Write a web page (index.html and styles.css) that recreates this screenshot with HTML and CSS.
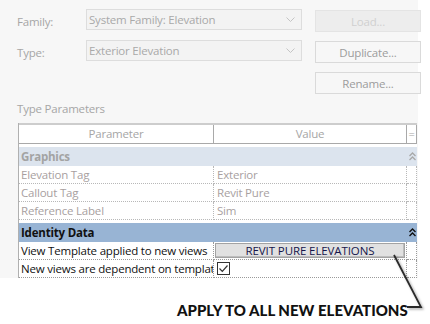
FILE: index.html
```html
<!DOCTYPE html>
<html>
<head>
  <meta charset="utf-8"/>
  <title>Type Properties</title>
  <link rel="stylesheet" href="styles.css">
</head>
<body>
  <div class="dialog">
    <!-- family / type pickers -->
    <div class="pickers">
      <span class="field-label">Family:</span>
      <div class="combo">
        <span>System Family: Elevation</span>
        <svg class="combo-arrow" width="9" height="6" viewBox="0 0 9 6"><path d="M0.5 0.5 L4.5 4.5 L8.5 0.5" fill="none" stroke="#c4c4c4" stroke-width="1"/></svg>
      </div>
      <button class="btn btn-off">Load...</button>

      <span class="field-label">Type:</span>
      <div class="combo">
        <span>Exterior Elevation</span>
        <svg class="combo-arrow" width="9" height="6" viewBox="0 0 9 6"><path d="M0.5 0.5 L4.5 4.5 L8.5 0.5" fill="none" stroke="#c4c4c4" stroke-width="1"/></svg>
      </div>
      <button class="btn">Duplicate...</button>

      <span></span>
      <span></span>
      <button class="btn">Rename...</button>
    </div>

    <div class="section-title">Type Parameters</div>

    <!-- parameter grid -->
    <div class="props">
      <div class="props-head">
        <div class="head-cell">Parameter</div>
        <div class="head-cell">Value</div>
        <div class="head-cell head-eq">=</div>
      </div>

      <div class="group group-off">
        <div class="group-name">Graphics</div>
        <div class="group-toggle">
          <svg width="7" height="9" viewBox="0 0 7 9"><path d="M0.5 4 L3.5 1 L6.5 4 M0.5 8 L3.5 5 L6.5 8" fill="none" stroke="#a8a8a8" stroke-width="1.3"/></svg>
        </div>
      </div>
      <div class="prop prop-off">
        <div class="cell">Elevation Tag</div>
        <div class="cell cell-value">Exterior</div>
        <div class="cell"></div>
      </div>
      <div class="prop prop-off">
        <div class="cell">Callout Tag</div>
        <div class="cell cell-value">Revit Pure</div>
        <div class="cell"></div>
      </div>
      <div class="prop prop-off">
        <div class="cell">Reference Label</div>
        <div class="cell cell-value">Sim</div>
        <div class="cell"></div>
      </div>

      <div class="group group-on">
        <div class="group-name">Identity Data</div>
        <div class="group-toggle">
          <svg width="7" height="9" viewBox="0 0 7 9"><path d="M0.5 4 L3.5 1 L6.5 4 M0.5 8 L3.5 5 L6.5 8" fill="none" stroke="#111" stroke-width="1.4"/></svg>
        </div>
      </div>
      <div class="prop">
        <div class="cell">View Template applied to new views</div>
        <div class="cell cell-btn"><button class="value-btn">REVIT PURE ELEVATIONS</button></div>
        <div class="cell"></div>
      </div>
      <div class="prop">
        <div class="cell">New views are dependent on template</div>
        <div class="cell cell-check">
          <span class="checkbox">
            <svg width="11" height="11" viewBox="0 0 11 11"><path d="M1.5 5.5 L4.3 8.3 L9.5 2.5" fill="none" stroke="#333" stroke-width="1.2"/></svg>
          </span>
        </div>
        <div class="cell"></div>
      </div>
    </div>
  </div>

  <div class="callout">APPLY TO ALL NEW ELEVATIONS</div>

  <!-- leader line from the label to the button -->
  <svg class="leader" width="430" height="324" viewBox="0 0 430 324">
    <defs>
      <filter id="soft" x="-20%" y="-20%" width="140%" height="140%">
        <feDropShadow dx="1.5" dy="1.5" stdDeviation="1.2" flood-color="#000" flood-opacity="0.35"/>
      </filter>
    </defs>
    <polyline points="407,307 421,307 394,255" fill="none" stroke="#2b2b2b" stroke-width="1.8" filter="url(#soft)"/>
  </svg>
</body>
</html>
```

FILE: styles.css
```css
body {
  margin: 0;
  width: 430px;
  height: 324px;
  position: relative;
  overflow: hidden;
  background-color: #fff;
  font-family: "Open Sans", "Noto Sans", sans-serif;
  font-size: 11.5px;
  letter-spacing: -0.2px;
}
.dialog {
  width: 418px;
  height: 278px;
  box-sizing: border-box;
  padding-top: 10px;
  background-color: #f7f7f7;
}
.pickers {
  display: grid;
  grid-template-columns: 56px 216px 106px;
  grid-template-rows: 22px 22px 22px;
  column-gap: 13px;
  row-gap: 9px;
  padding-left: 17px;
}
.field-label {
  color: #a6a6a6;
  align-self: center;
}
.combo {
  height: 21px;
  margin-top: -1px;
  box-sizing: border-box;
  border: 1px solid #dddddd;
  background-color: #f3f3f3;
  color: #a9a9a9;
  padding: 0 6px 0 2px;
  display: flex;
  align-items: center;
  justify-content: space-between;
}
.btn {
  height: 22px;
  width: 106px;
  box-sizing: border-box;
  border: 1px solid #dadada;
  background-color: #f7f7f7;
  color: #9c9c9c;
  font-family: inherit;
  font-size: 11.5px;
  letter-spacing: -0.2px;
  padding: 0;
}
.btn-off {
  background-color: #ededed;
  border-color: #e4e4e4;
  color: #d0d0d0;
}
.section-title {
  color: #a6a6a6;
  line-height: 16px;
  margin: 7px 0 6px 17px;
}
.props {
  margin-left: 18px;
  width: 399px;
  box-sizing: border-box;
  border-left: 1px solid #b0b0b0;
  background-color: #fff;
}
.props-head, .prop, .group {
  display: grid;
  grid-template-columns: 195px 193px 10px;
}
.props-head {
  border-top: 2px solid #cdcdcd;
  border-bottom: 1px solid #a9a9a9;
  margin-bottom: 3px;
}
.head-cell {
  height: 18px;
  line-height: 18px;
  text-align: center;
  color: #a6a6a6;
  border-right: 1px solid #a9a9a9;
}
.head-eq {
  font-size: 11px;
}
.group {
  height: 19px;
  line-height: 19px;
  margin-top: 3px;
  font-weight: bold;
}
.props-head + .group {
  margin-top: 0;
}
.group-name {
  grid-column: 1 / 3;
  padding-left: 2px;
}
.group-toggle {
  display: flex;
  align-items: center;
  justify-content: center;
}
.group-off {
  background-color: #dce4ee;
  color: #a3a3a3;
}
.group-on {
  background-color: #98b4d4;
  color: #111;
}
.prop .cell {
  height: 17px;
  line-height: 17px;
  border-right: 1px dotted #9a9a9a;
  border-bottom: 1px dotted #9a9a9a;
  white-space: nowrap;
  overflow: hidden;
  padding-left: 2px;
  color: #111;
}
.prop-off .cell {
  color: #a89f9f;
  border-color: #b8b8b8;
}
.prop .cell-value {
  padding-left: 3px;
}
.prop .cell-btn {
  padding: 1px 0 0 1px;
  box-sizing: border-box;
  height: 18px;
}
.value-btn {
  display: block;
  width: 190px;
  height: 15px;
  box-sizing: border-box;
  border: 1px solid #a3a3a3;
  box-shadow: inset -1px -1px 0 #bdbdbd;
  background-color: #e1e1e1;
  color: #15154a;
  font-family: inherit;
  font-size: 11.5px;
  letter-spacing: -0.1px;
  line-height: 12px;
  padding: 0;
}
.cell-check {
  display: flex;
  align-items: center;
}
.checkbox {
  width: 13px;
  height: 13px;
  box-sizing: border-box;
  border: 1px solid #333;
  background-color: #fff;
  display: flex;
  align-items: center;
  justify-content: center;
  margin-left: 1px;
}
.callout {
  margin: 24px 0 0 177px;
  font-family: "Lato", sans-serif;
  font-weight: 900;
  font-size: 15px;
  letter-spacing: 0;
  line-height: 16px;
  color: #111;
  white-space: nowrap;
}
.leader {
  position: absolute;
  left: 0;
  top: 0;
}
```
